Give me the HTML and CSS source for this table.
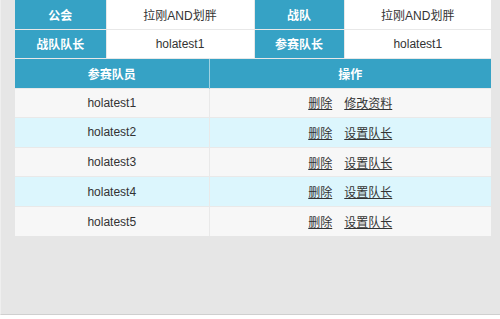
FILE: index.html
```html
<!DOCTYPE html>
<html>
<head>
<meta charset="utf-8">
<link rel="stylesheet" href="styles.css">
</head>
<body>
<div class="page">
  <div class="panel">
    <table class="info">
      <colgroup><col class="c1"><col class="c2"><col class="c3"><col class="c4"></colgroup>
      <tr><th>公会</th><td>拉刚AND划胖</td><th>战队</th><td>拉刚AND划胖</td></tr>
      <tr><th>战队队长</th><td>holatest1</td><th>参赛队长</th><td>holatest1</td></tr>
    </table>
    <table class="members">
      <colgroup><col class="m1"><col class="m2"></colgroup>
      <tr><th>参赛队员</th><th>操作</th></tr>
      <tr class="odd"><td>holatest1</td><td><a>删除</a><a>修改资料</a></td></tr>
      <tr class="even"><td>holatest2</td><td><a>删除</a><a>设置队长</a></td></tr>
      <tr class="odd"><td>holatest3</td><td><a>删除</a><a>设置队长</a></td></tr>
      <tr class="even"><td>holatest4</td><td><a>删除</a><a>设置队长</a></td></tr>
      <tr class="odd"><td>holatest5</td><td><a>删除</a><a>设置队长</a></td></tr>
    </table>
  </div>
</div>
</body>
</html>
```
FILE: styles.css
```css
html, body { margin: 0; padding: 0; background: #fff; }
body { font-family: "Liberation Sans", "Noto Sans CJK SC", sans-serif; font-size: 12px; color: #333; }
.page {
  height: 315px;
  background: #e6e6e6;
  border-bottom: 1px solid #cfcfcf;
  border-left: 1px solid #efefef;
  box-sizing: border-box;
  padding-left: 14px;
}
.panel { width: 476px; }
table { border-collapse: collapse; width: 476px; table-layout: fixed; }
.c1 { width: 91px; } .c2 { width: 148px; } .c3 { width: 90px; } .c4 { width: 147px; }
.m1 { width: 194px; } .m2 { width: 282px; }
th, td { text-align: center; padding: 0; font-weight: normal; }
.info tr { height: 29px; }
.info th { background: #36a2c5; color: #fff; font-weight: bold; border: 1px solid #e8e8e8; border-top: none; }
.info td { background: #fff; border: 1px solid #e8e8e8; border-top: none; }
.info tr:first-child th, .info tr:first-child td { border-top: none; }
.info tr > :first-child { border-left: none; }
.info tr > :last-child { border-right: none; }
.members tr { height: 29.6px; }
.members th { background: #36a2c5; color: #fff; font-weight: bold; border-left: 1px solid #9fd2e2; }
.members th:first-child { border-left: none; }
.members td { border-top: 1px solid #e9e9e9; border-left: 1px solid #e9e9e9; }
.members td:first-child { border-left: none; }
.members tr.odd td { background: #f7f7f7; }
.members tr.even td { background: #dcf6fd; }
.members a { text-decoration: underline; color: #333; margin: 0 6px; }
```
